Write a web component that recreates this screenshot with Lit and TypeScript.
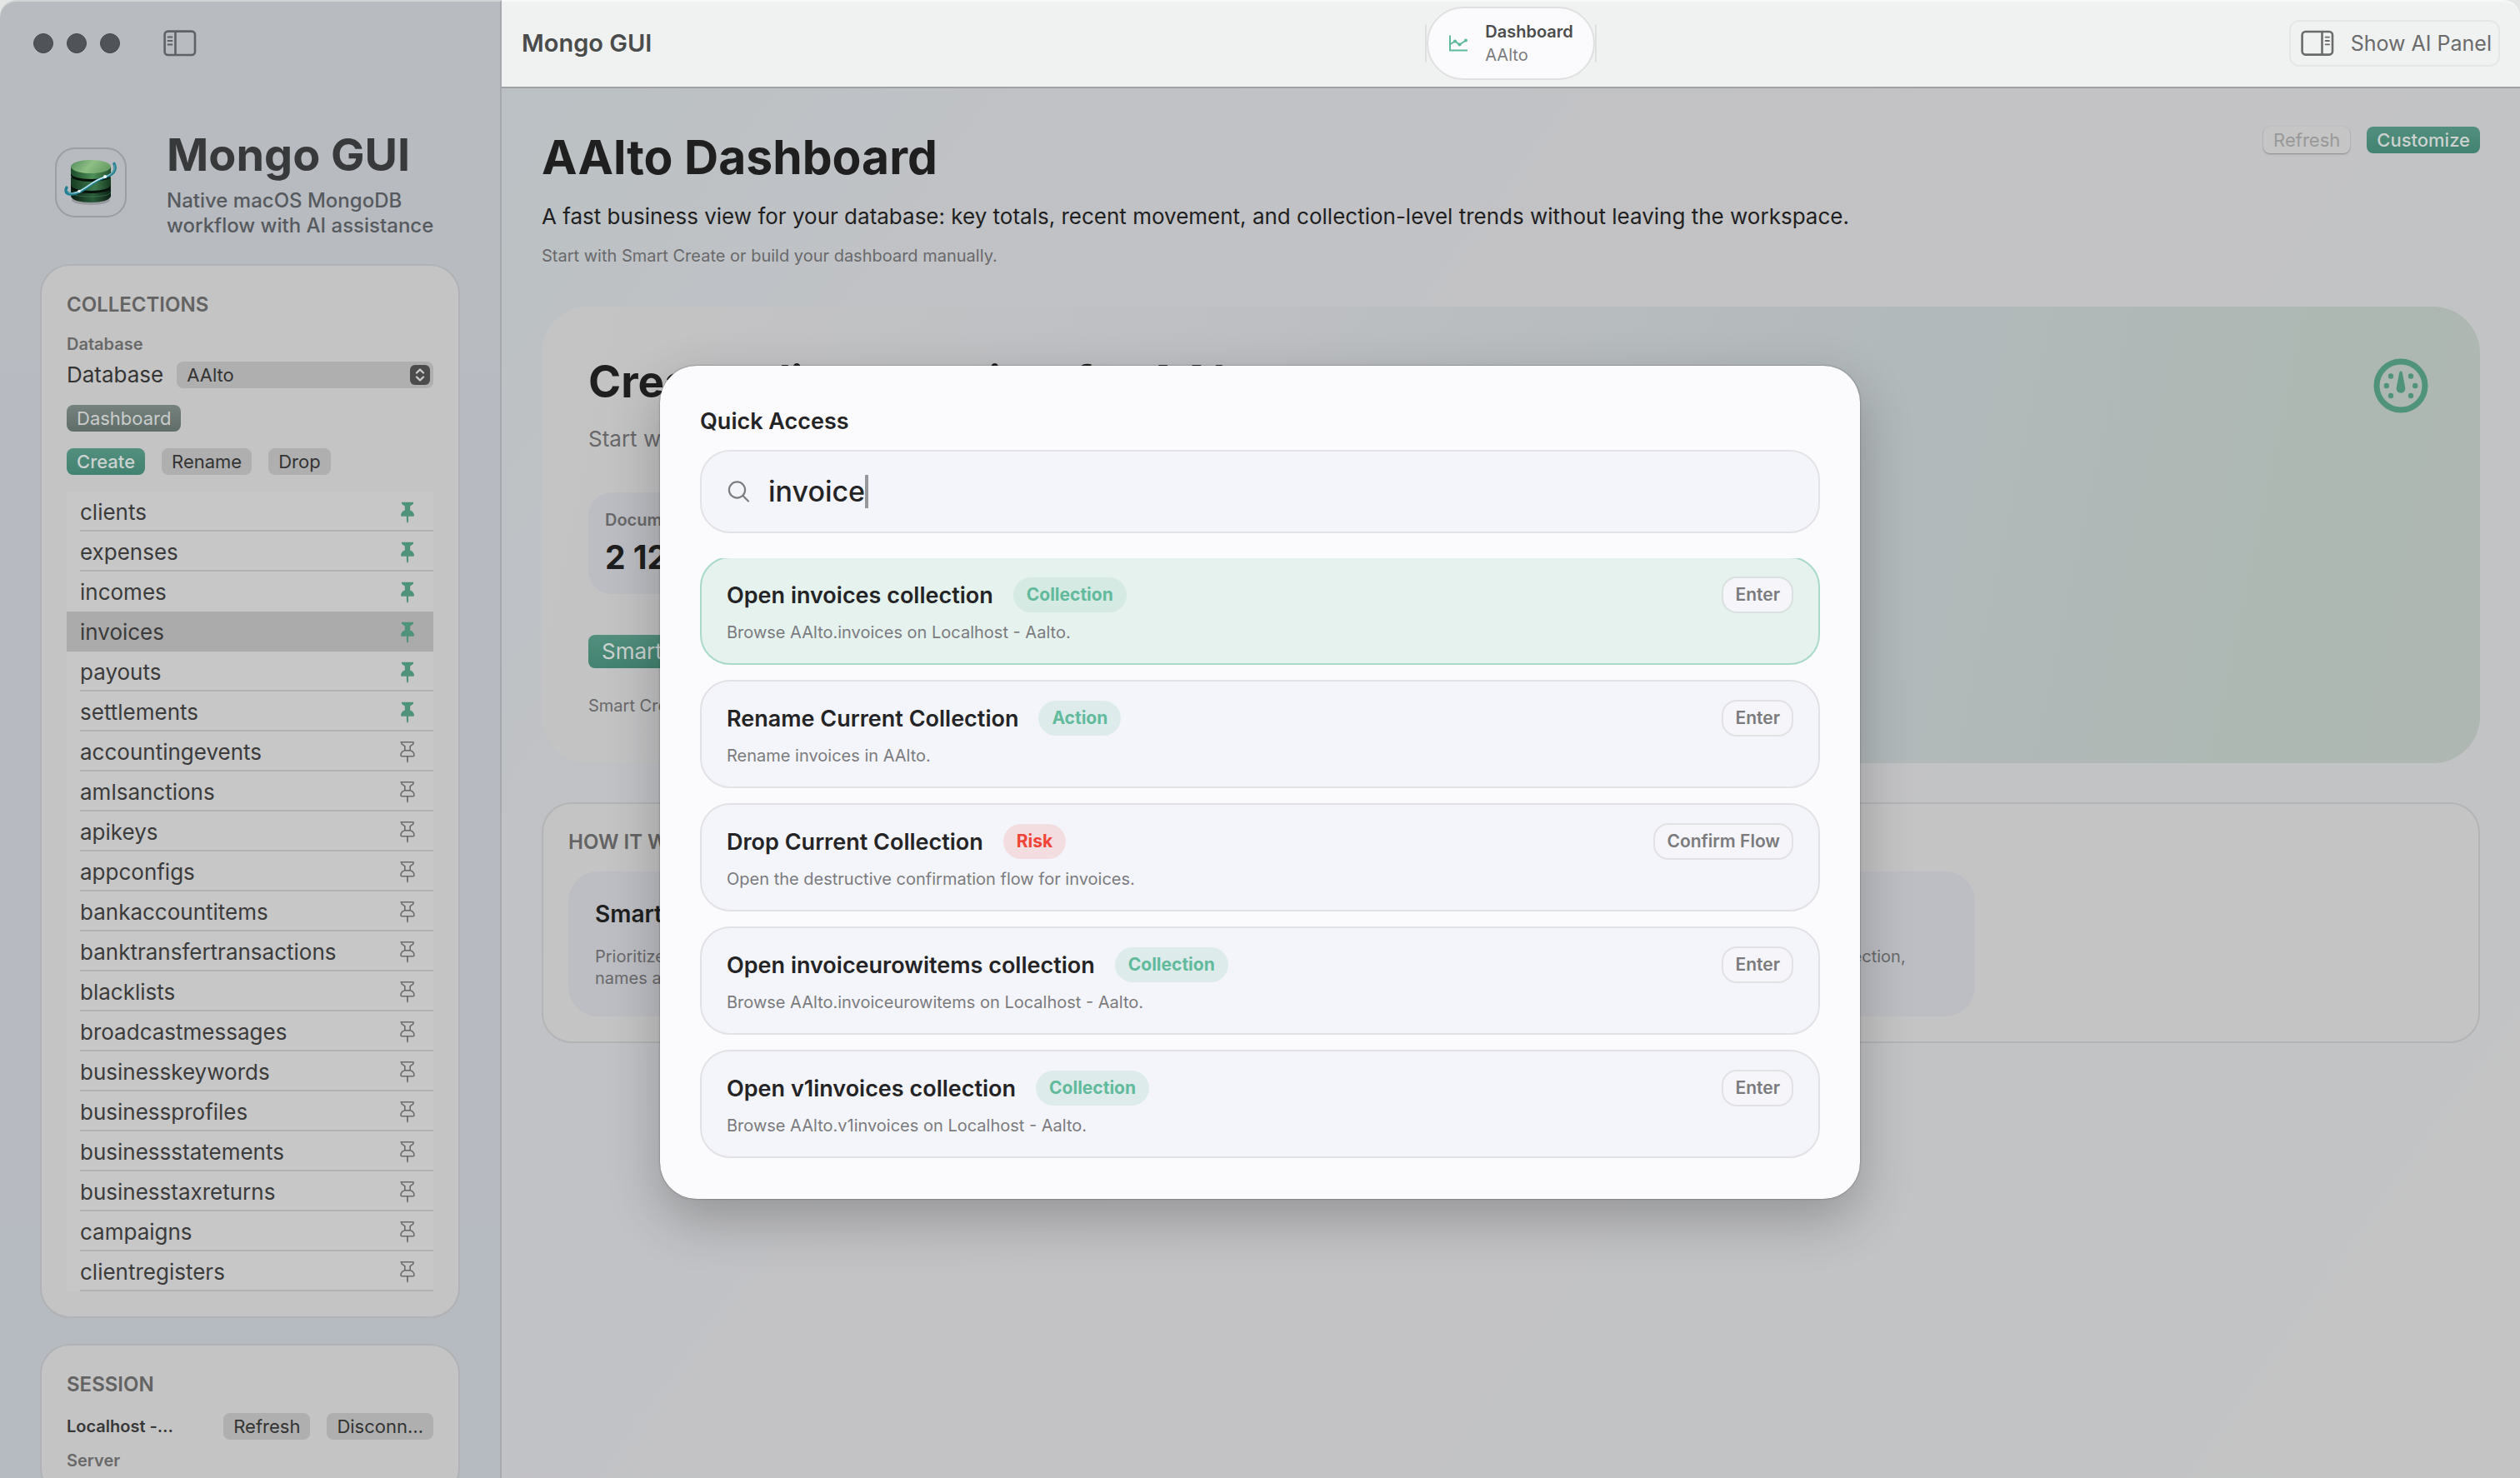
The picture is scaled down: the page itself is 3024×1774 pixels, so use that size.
import { LitElement, html, css, svg } from "lit";
import { customElement, state } from "lit/decorators.js";
import { classMap } from "lit/directives/class-map.js";

interface Result {
  title: string;
  kind: "Collection" | "Action" | "Risk";
  detail: string;
  hint: string;
}

const COLLECTIONS = [
  "clients", "expenses", "incomes", "invoices", "payouts", "settlements",
  "accountingevents", "amlsanctions", "apikeys", "appconfigs",
  "bankaccountitems", "banktransfertransactions", "blacklists",
  "broadcastmessages", "businesskeywords", "businessprofiles",
  "businessstatements", "businesstaxreturns", "campaigns", "clientregisters",
];
const PINNED = 6;

const RESULTS: Result[] = [
  { title: "Open invoices collection", kind: "Collection", detail: "Browse AAlto.invoices on Localhost - Aalto.", hint: "Enter" },
  { title: "Rename Current Collection", kind: "Action", detail: "Rename invoices in AAlto.", hint: "Enter" },
  { title: "Drop Current Collection", kind: "Risk", detail: "Open the destructive confirmation flow for invoices.", hint: "Confirm Flow" },
  { title: "Open invoiceurowitems collection", kind: "Collection", detail: "Browse AAlto.invoiceurowitems on Localhost - Aalto.", hint: "Enter" },
  { title: "Open v1invoices collection", kind: "Collection", detail: "Browse AAlto.v1invoices on Localhost - Aalto.", hint: "Enter" },
];

const base = css`
  :host { display: block; }
  *, *::before, *::after { box-sizing: border-box; }
  h1, h2, h3, p, ul { margin: 0; padding: 0; font-weight: inherit; }
  ul { list-style: none; }
  svg { display: block; flex: none; }
  button, select, input { font: inherit; color: inherit; margin: 0; border: 0; background: none; padding: 0; }
  .btn {
    height: 32px; padding: 0 12px; border-radius: 8px; white-space: nowrap;
    font-size: 22px; line-height: 32px; background: #afafaf; color: #333;
  }
  .btn.primary { background: linear-gradient(#538f7e, #428270); color: #cbd2cf; font-weight: 500; }
  .btn.muted { background: linear-gradient(#76827e, #5f6d68); color: #c9cccb; }
  .section { font-size: 24px; line-height: 28px; font-weight: 600; color: #636363; }
`;

const pinShape = "M1 .8H16V2.8L12.2 5.6V10.6C15.4 11.8 17 14 17 16.6Q17 17.8 15.8 17.8H2.2Q1 17.8 1 16.6C1 14 2.6 11.8 5.8 10.6V5.6L2 2.8V.8Z";

@customElement("side-bar")
class SideBar extends LitElement {
  static styles = [base, css`
    :host {
      width: 602px; flex: none; overflow: hidden; padding: 0 48px;
      border-top: 2px solid #d0d3d4; border-right: 2px solid #a6a9ad;
      border-top-left-radius: 20px;
      background: linear-gradient(#b8bbc0, #b6bac1);
    }
    .bar { height: 100px; display: flex; align-items: center; gap: 16px; margin-left: -8px; }
    .light { width: 24px; height: 24px; border-radius: 50%; background: #505459; border: 1px solid #45484c; }
    .toggle { margin-left: 36px; }
    .brand { display: flex; align-items: center; gap: 48px; padding: 50px 0 31px 18px; }
    .logo { border: 2px solid #9b9ea2; border-radius: 24px; width: 86px; height: 84px; flex: none; }
    .name { font-size: 54px; line-height: 68px; font-weight: 700; color: #38393a; white-space: nowrap; }
    .tagline { margin-top: 6px; font-size: 24px; line-height: 30px; font-weight: 500; color: #565a5e; white-space: nowrap; }
    .card {
      border: 2px solid #b0b2b5; border-radius: 36px; background: #c4c4c4;
      padding: 33px 30px 30px; display: flex; flex-direction: column; gap: 20px;
      margin-bottom: 31px;
    }
    .small { font-size: 20px; line-height: 26px; font-weight: 600; color: #696969; }
    .pick { display: flex; flex-direction: column; gap: 8px; }
    .row { display: flex; align-items: center; gap: 20px; }
    .field { gap: 16px; font-size: 26px; line-height: 32px; color: #343434; }
    .select { flex: 1; display: grid; align-items: center; height: 32px; border-radius: 8px; background: #afafaf; }
    .select select, .select svg { grid-area: 1 / 1; }
    .select select { appearance: none; height: 32px; padding: 0 12px; font-size: 22px; color: #333; width: 100%; }
    .select svg { justify-self: end; margin-right: 4px; pointer-events: none; }
    .list { background: #c7c7c7; }
    .item { display: flex; padding-left: 16px; height: 48px; }
    .line {
      flex: 1; display: flex; align-items: center; justify-content: space-between;
      padding: 4px 22px 0 0; border-bottom: 2px solid #b2b2b2;
    }
    .item.on { background: #ababab; }
    .item.on .line, .item.before .line { border-color: transparent; }
    .open { font-size: 26px; line-height: 42px; color: #3b3b3b; }
    .session { gap: 12px; }
    .session .section { margin-bottom: 8px; }
    .host { flex: 1; font-size: 20px; font-weight: 600; color: #383838; white-space: nowrap; }
  `];

  private pin(on: boolean) {
    return on
      ? svg`<svg width="18" height="26" viewBox="0 0 18 26"><path fill="#50937b" d=${pinShape}></path><path fill="#50937b" d="M7.9 17H10.1V23.8L9 26L7.9 23.8Z"></path></svg>`
      : svg`<svg width="18" height="26" viewBox="0 0 18 26"><path fill="none" stroke="#6c6c6c" stroke-width="1.6" stroke-linejoin="round" d=${pinShape}></path><path fill="none" stroke="#6c6c6c" stroke-width="1.6" d="M5.4 10.8H12.6"></path><path fill="#6c6c6c" d="M8.1 18H9.9V23.8L9 26L8.1 23.8Z"></path></svg>`;
  }

  render() {
    return html`
      <div class="bar">
        <span class="light"></span><span class="light"></span><span class="light"></span>
        <button class="toggle" aria-label="Toggle sidebar">
          <svg width="40" height="32" viewBox="0 0 40 32" fill="none" stroke="#5e6165" stroke-width="2.6">
            <rect x="1.6" y="1.6" width="36.4" height="28.4" rx="4"></rect>
            <path d="M14.5 2V30"></path>
            <path d="M5.6 8.6H10.4M5.6 13H10.4M5.6 17.4H10.4" stroke-width="2" stroke-linecap="round"></path>
          </svg>
        </button>
      </div>
      <div class="brand">
        <svg class="logo" viewBox="0 0 82 80">
          <defs>
            <linearGradient id="top" x1="0" x2="1" y1="0" y2="0.3"><stop offset="0" stop-color="#4f8a58"></stop><stop offset=".55" stop-color="#8fbf85"></stop><stop offset="1" stop-color="#6ba068"></stop></linearGradient>
            <linearGradient id="a" x1="0" x2="1"><stop offset="0" stop-color="#1d4a2c"></stop><stop offset=".55" stop-color="#4f9058"></stop><stop offset="1" stop-color="#21502f"></stop></linearGradient>
            <linearGradient id="b" x1="0" x2="1"><stop offset="0" stop-color="#15381f"></stop><stop offset=".6" stop-color="#3e7a4d"></stop><stop offset="1" stop-color="#16391f"></stop></linearGradient>
            <linearGradient id="c" x1="0" x2="1"><stop offset="0" stop-color="#0b1f14"></stop><stop offset=".55" stop-color="#2a5c3a"></stop><stop offset="1" stop-color="#0b1f14"></stop></linearGradient>
            <linearGradient id="s" x1="0" x2="1"><stop offset="0" stop-color="#2b8c9b"></stop><stop offset=".25" stop-color="#b4dfe4"></stop><stop offset=".75" stop-color="#d5eef0"></stop><stop offset="1" stop-color="#4d97a3"></stop></linearGradient>
          </defs>
          <ellipse cx="41" cy="61" rx="23" ry="6" fill="#979a9e"></ellipse>
          <path d="M17 47V56C17 61 28 64 41 64S65 61 65 56V47Z" fill="url(#c)"></path>
          <path d="M17 34V46C17 50 28 53 41 53S65 50 65 46V34Z" fill="#06110b"></path>
          <path d="M17 34V43C17 47 28 50 41 50S65 47 65 43V34Z" fill="url(#b)"></path>
          <path d="M17 22V32C17 36 28 39 41 39S65 36 65 32V22Z" fill="#06110b"></path>
          <path d="M17 21V29C17 33 28 36 41 36S65 33 65 29V21Z" fill="url(#a)"></path>
          <ellipse cx="41" cy="21" rx="24" ry="8" fill="url(#top)"></ellipse>
          <path d="M17 51C17 55 28 57 41 57S65 55 65 51" fill="none" stroke="#4c8a5d" stroke-width=".8" opacity=".7"></path>
          <path d="M12 46C9 52 13 56 23 53C36 49 42 39 56 34.500C67 31 73 26 69 17.500" fill="none" stroke="#1f7f90" stroke-width="3.400" stroke-linecap="round"></path>
          <path d="M12 49C13 54 20 54 27 50.500C38 45 44 38 56 34C65 31 71 26 69.500 19" fill="none" stroke="url(#s)" stroke-width="1.500" stroke-linecap="round"></path>
          <circle cx="58" cy="33" r="2" fill="#eefafa"></circle>
          <circle cx="27" cy="50.500" r="1.800" fill="#e2f4f5"></circle>
        </svg>
        <div>
          <h1 class="name">Mongo GUI</h1>
          <p class="tagline">Native macOS MongoDB<br />workflow with AI assistance</p>
        </div>
      </div>

      <section class="card">
        <h2 class="section">COLLECTIONS</h2>
        <div class="pick">
          <span class="small">Database</span>
          <div class="row field">
            <label for="db">Database</label>
            <div class="select">
              <select id="db"><option>AAlto</option></select>
              <svg width="24" height="24" viewBox="0 0 24 24">
                <rect width="24" height="24" rx="6" fill="#4c4c4c"></rect>
                <path d="M8 9.500L12 5.500L16 9.500M8 14.500L12 18.500L16 14.500" fill="none" stroke="#c9c9c9" stroke-width="2.400" stroke-linecap="round" stroke-linejoin="round"></path>
              </svg>
            </div>
          </div>
        </div>
        <div class="row"><button class="btn muted">Dashboard</button></div>
        <div class="row">
          <button class="btn primary">Create</button>
          <button class="btn">Rename</button>
          <button class="btn">Drop</button>
        </div>
        <ul class="list">
          ${COLLECTIONS.map((name, i) => html`
            <li class=${classMap({ item: true, on: name === "invoices", before: COLLECTIONS[i + 1] === "invoices" })}>
              <div class="line">
                <button class="open">${name}</button>
                <button aria-label=${i < PINNED ? `Unpin ${name}` : `Pin ${name}`}>${this.pin(i < PINNED)}</button>
              </div>
            </li>`)}
        </ul>
      </section>

      <section class="card session">
        <h2 class="section">SESSION</h2>
        <div class="row">
          <span class="host">Localhost -…</span>
          <button class="btn">Refresh</button>
          <button class="btn">Disconn…</button>
        </div>
        <span class="small">Server</span>
      </section>
    `;
  }
}

@customElement("tool-bar")
class ToolBar extends LitElement {
  static styles = [base, css`
    :host {
      height: 106px; display: grid; grid-template-columns: 1fr auto 1fr; align-items: center;
      padding: 0 24px 2px; background: #f0f1f1;
      border-top: 2px solid #f8f8f8; border-bottom: 2px solid #a0a1a2;
      border-top-right-radius: 20px;
    }
    .title { font-size: 29px; line-height: 36px; font-weight: 600; color: #4a4b4b; }
    .tab { border: solid #e0e0e1; border-width: 0 2px; display: flex; align-items: center; height: 46px; }
    .pill {
      height: 88px; border: 2px solid #e0e0e1; border-radius: 44px; background: #fbfbfd;
      display: flex; align-items: center; gap: 20px; padding: 0 24px; text-align: left;
    }
    .tabname { display: block; font-size: 20px; line-height: 28px; font-weight: 600; color: #4c4c4c; }
    .tabsub { display: block; font-size: 20px; line-height: 28px; color: #7c7c7e; }
    .ai {
      justify-self: end; height: 56px; border: 2px solid #e6e6e6; border-radius: 12px;
      display: flex; align-items: center; gap: 20px; padding: 0 8px 0 12px;
      font-size: 25px; color: #6b6b6b;
    }
  `];

  render() {
    return html`
      <span class="title">Mongo GUI</span>
      <div class="tab">
        <button class="pill">
          <svg width="24" height="22" viewBox="0 0 24 22" fill="none" stroke="#5fb99c" stroke-width="2">
            <path d="M2 1.500V19.500H23"></path>
            <path d="M2.500 12L8 8.500L13.500 12.500L21 7.500"></path>
            <g fill="#5fb99c" stroke="none"><circle cx="8" cy="8.500" r="2"></circle><circle cx="13.500" cy="12.500" r="2"></circle><circle cx="21" cy="7.500" r="2"></circle></g>
          </svg>
          <span><span class="tabname">Dashboard</span><span class="tabsub">AAlto</span></span>
        </button>
      </div>
      <button class="ai">
        <svg width="40" height="32" viewBox="0 0 40 32" fill="none" stroke="#6b6b6b" stroke-width="2.600">
          <rect x="1.600" y="2" width="36.400" height="27.600" rx="4"></rect>
          <path d="M25.500 2V30"></path>
          <path d="M29.600 8.600H34M29.600 13H34M29.600 17.400H34" stroke-width="1.800" stroke-linecap="round"></path>
        </svg>
        Show AI Panel
      </button>
    `;
  }
}

@customElement("dashboard-view")
class DashboardView extends LitElement {
  static styles = [base, css`
    :host {
      flex: 1; padding: 46px 48px 0; color: #1f1f1f;
      background: linear-gradient(125deg, #bbc1c4 0%, #c1c2c6 22%, #c3c3c5 50%, #c2c3c5 78%, #c4c4c4 100%);
    }
    .head { display: flex; justify-content: space-between; align-items: flex-start; margin-bottom: 48px; }
    .intro, .actions { display: flex; }
    .intro { flex-direction: column; gap: 17px; }
    .h1 { font-size: 57px; line-height: 74px; font-weight: 700; }
    .lead { font-size: 26px; line-height: 34px; }
    .note { font-size: 20px; line-height: 26px; color: #69696b; }
    .actions { gap: 20px; }
    .btn.off { background: #c5c5c5; color: #999; box-shadow: 0 1px 2px rgba(0, 0, 0, .3); }
    .hero {
      border-radius: 56px; padding: 56px; margin-bottom: 47px;
      display: flex; justify-content: space-between; align-items: flex-start;
      background: linear-gradient(102deg, #c4c4c4 0%, #bfc0c4 30%, #b2b9bb 68%, #aeb8b3 88%, #aeb7b2 100%);
    }
    .copy { display: flex; flex-direction: column; align-items: flex-start; }
    .h2 { font-size: 53px; line-height: 68px; font-weight: 700; margin-bottom: 18px; }
    .sub { font-size: 26px; line-height: 34px; color: #68686a; margin-bottom: 47px; }
    .tile { border-radius: 28px; background: #bcbdc2; padding: 20px; width: 260px; height: 122px; margin-bottom: 49px; }
    .tilename { font-size: 20px; line-height: 26px; font-weight: 600; color: #68686a; }
    .value { font-size: 39px; line-height: 48px; font-weight: 700; margin-top: 8px; }
    .btn.large { height: 40px; padding: 0 16px; font-size: 26px; line-height: 40px; margin-bottom: 32px; font-weight: 400; }
    .how { border: 2px solid #b3b4b6; border-radius: 36px; background: #c4c4c4; padding: 32px 30px 30px; }
    .step { max-width: 1688px; margin-top: 21px; border-radius: 36px; background: #bdbec3; padding: 33px 32px; }
    .h3 { font-size: 28px; line-height: 36px; font-weight: 600; margin-bottom: 20px; }
  `];

  render() {
    return html`
      <header class="head">
        <div class="intro">
          <h1 class="h1">AAlto Dashboard</h1>
          <p class="lead">A fast business view for your database: key totals, recent movement, and collection-level trends without leaving the workspace.</p>
          <p class="note">Start with Smart Create or build your dashboard manually.</p>
        </div>
        <div class="actions">
          <button class="btn off" disabled>Refresh</button>
          <button class="btn primary">Customize</button>
        </div>
      </header>

      <section class="hero">
        <div class="copy">
          <h2 class="h2">Create a live overview for AAlto</h2>
          <p class="sub">Start with the totals and trends that matter for this database.</p>
          <div class="tile">
            <div class="tilename">Documents</div>
            <div class="value">2 120</div>
          </div>
          <button class="btn primary large">Smart Create</button>
          <p class="note">Smart Create suggests widgets from your collections.</p>
        </div>
        <svg width="78" height="78" viewBox="0 0 78 78" fill="#50937b">
          <circle cx="39" cy="39" r="29" fill="none" stroke="#50937b" stroke-width="7"></circle>
          <path d="M37.200 23Q39 19.500 40.800 23L44.200 41A5.400 5.400 0 1 1 33.800 41Z"></path>
          <circle cx="27" cy="27.500" r="3.200"></circle><circle cx="51" cy="27.500" r="3.200"></circle>
          <circle cx="21.800" cy="39" r="3.200"></circle><circle cx="56.200" cy="39" r="3.200"></circle>
          <circle cx="27" cy="51" r="3.200"></circle><circle cx="51" cy="51" r="3.200"></circle>
        </svg>
      </section>

      <section class="how">
        <h2 class="section">HOW IT WORKS</h2>
        <div class="step">
          <h3 class="h3">Smart Create</h3>
          <p class="note">Prioritizes the collections that carry the most business meaning, reads a few sample documents, checks field type and date ranges, and then looks at every collection,<br />names and sizes before suggesting widgets.</p>
        </div>
      </section>
    `;
  }
}

@customElement("quick-access")
class QuickAccess extends LitElement {
  @state() private query = "invoice";

  static styles = [base, css`
    :host {
      width: 1440px; max-width: 90vw; border-radius: 44px; background: #fbfbfd; padding: 48px 48px 49px; color: #242426;
      box-shadow: 0 24px 64px rgba(0, 0, 0, .24), 0 0 2px rgba(0, 0, 0, .5);
    }
    .heading { font-size: 27px; line-height: 37px; font-weight: 600; margin-bottom: 16px; }
    .search {
      height: 100px; border: 2px solid #e3e3e7; border-radius: 36px; background: #f4f5fa;
      display: flex; align-items: center; padding: 0 30px; margin-bottom: 30px;
    }
    .query { field-sizing: content; margin-left: 22px; font-size: 34px; line-height: 44px; font-weight: 500; outline: 0; caret-color: #98989a; }
    .caret { width: 4px; height: 40px; background: #98989a; }
    .clip { overflow: hidden; }
    .results { margin-top: -2px; display: flex; flex-direction: column; gap: 18px; }
    .result {
      height: 130px; width: 100%; border: 2px solid #e2e2e6; border-radius: 36px; background: #f4f5fa;
      padding: 22px 30px; display: grid; grid-template-columns: 1fr auto; align-items: start; text-align: left;
    }
    .result.on { background: #e5f2ee; border-color: #a9dac9; }
    .line { display: flex; align-items: center; gap: 24px; height: 44px; }
    .name { font-size: 27px; font-weight: 600; }
    .badge { height: 42px; line-height: 42px; padding: 0 16px; border-radius: 21px; font-size: 21px; font-weight: 700; color: #62ba9d; background: #ddecea; }
    .on .badge { background: #d5eae2; }
    .badge.risk { color: #f04438; background: #f3dde0; }
    .detail { display: block; margin-top: 10px; font-size: 20px; line-height: 26px; color: #7b7b7f; }
    .hint { height: 44px; line-height: 40px; padding: 0 14px; border: 2px solid #e2e2e5; border-radius: 18px; background: #f5f5fa; font-size: 21px; font-weight: 600; color: #7b7b7d; }
    .on .hint { border-color: #dae1e0; }
  `];

  render() {
    return html`
      <h2 class="heading">Quick Access</h2>
      <label class="search">
        <svg width="28" height="28" viewBox="0 0 28 28" fill="none" stroke="#7d7d80" stroke-width="2.200" stroke-linecap="round">
          <circle cx="12.500" cy="12" r="9.600"></circle><path d="M19.500 19L26 25.500"></path>
        </svg>
        <input class="query" type="text" size="7" aria-label="Search" .value=${this.query}
          @input=${(e: Event) => (this.query = (e.target as HTMLInputElement).value)} />
        <span class="caret"></span>
      </label>
      <div class="clip">
        <ul class="results">
          ${RESULTS.map((r, i) => html`
            <li>
              <button class=${classMap({ result: true, on: i === 0 })}>
                <span>
                  <span class="line">
                    <span class="name">${r.title}</span>
                    <span class=${classMap({ badge: true, risk: r.kind === "Risk" })}>${r.kind}</span>
                  </span>
                  <span class="detail">${r.detail}</span>
                </span>
                <span class="hint">${r.hint}</span>
              </button>
            </li>`)}
        </ul>
      </div>
    `;
  }
}

@customElement("app-root")
class AppRoot extends LitElement {
  static styles = [base, css`
    :host {
      position: relative; display: flex; height: 100vh; overflow: hidden; background: #e4e6e6;
      font-family: Inter, "Noto Sans", sans-serif;
    }
    .main { flex: 1; min-width: 0; display: flex; flex-direction: column; }
    .overlay { position: absolute; inset: 104px 0 0 0; display: flex; align-items: center; justify-content: center; }
  `];

  render() {
    return html`
      <side-bar></side-bar>
      <div class="main">
        <tool-bar></tool-bar>
        <dashboard-view></dashboard-view>
      </div>
      <div class="overlay">
        <quick-access role="dialog" aria-label="Quick Access"></quick-access>
      </div>
    `;
  }
}
